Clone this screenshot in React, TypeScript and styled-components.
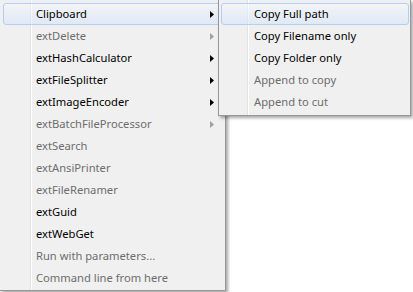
import React from 'react';
import styled, { createGlobalStyle } from 'styled-components';

const GlobalStyle = createGlobalStyle`
  html, body {
    margin: 0;
    padding: 0;
    background: #ffffff;
  }
  body {
    font-family: "Segoe UI", "Noto Sans", "Liberation Sans", sans-serif;
    font-size: 11.2px;
  }
`;

interface MenuEntry {
  label: string;
  disabled?: boolean;
  submenu?: boolean;
  active?: boolean;
}

const mainItems: MenuEntry[] = [
  { label: 'Clipboard', submenu: true, active: true },
  { label: 'extDelete', submenu: true, disabled: true },
  { label: 'extHashCalculator', submenu: true },
  { label: 'extFileSplitter', submenu: true },
  { label: 'extImageEncoder', submenu: true },
  { label: 'extBatchFileProcessor', submenu: true, disabled: true },
  { label: 'extSearch', disabled: true },
  { label: 'extAnsiPrinter', disabled: true },
  { label: 'extFileRenamer', disabled: true },
  { label: 'extGuid' },
  { label: 'extWebGet' },
  { label: 'Run with parameters...', disabled: true },
  { label: 'Command line from here', disabled: true },
];

const clipboardItems: MenuEntry[] = [
  { label: 'Copy Full path', active: true },
  { label: 'Copy Filename only' },
  { label: 'Copy Folder only' },
  { label: 'Append to copy', disabled: true },
  { label: 'Append to cut', disabled: true },
];

const Screen = styled.div`
  position: relative;
  width: 413px;
  height: 292px;
  overflow: hidden;
  background: #ffffff;
`;

// gutter: grey line + white line at the given offset
const gutter = (x: number) => `linear-gradient(to right,
    transparent ${x}px, #e2e3e3 ${x}px, #e2e3e3 ${x + 1}px,
    #ffffff ${x + 1}px, #ffffff ${x + 2}px, transparent ${x + 2}px)`;

const MainMenu = styled.div`
  width: 219px;
  padding: 3px 3px 1px 3px;
  background: ${gutter(30)}, #f0f0f0;
  border-right: 1px solid #979797;
  border-bottom: 1px solid #979797;
  box-shadow: 2px 2px 3px rgba(0, 0, 0, 0.35);
`;

const SubMenu = styled.div`
  position: absolute;
  left: 218px;
  top: 0;
  width: 188px;
  padding: 3px 1px 2px 2px;
  background: ${gutter(28)}, #f0f0f0;
  border: 1px solid #979797;
  border-top: none;
  box-shadow: 2px 2px 3px rgba(0, 0, 0, 0.35);
`;

const Item = styled.div<{ $active?: boolean; $disabled?: boolean }>`
  display: flex;
  align-items: center;
  height: 22px;
  box-sizing: border-box;
  padding: 0 7px 0 32px;
  border: 1px solid ${(p) => (p.$active ? '#aecff7' : 'transparent')};
  border-radius: 3px;
  background: ${(p) =>
    p.$active
      ? 'linear-gradient(to bottom, rgba(246, 250, 255, 0.45), rgba(205, 224, 252, 0.45))'
      : 'transparent'};
  color: ${(p) => (p.$disabled ? '#6d6d6d' : '#000000')};
  white-space: nowrap;
`;

const Label = styled.span`
  flex: 1;
  line-height: 20px;
`;

const Arrow = styled.svg<{ $disabled?: boolean }>`
  width: 4px;
  height: 7px;
  fill: ${(p) => (p.$disabled ? '#a0a0a0' : '#000000')};
`;

const MenuRow: React.FC<{ entry: MenuEntry }> = ({ entry }) => (
  <Item $active={entry.active} $disabled={entry.disabled}>
    <Label>{entry.label}</Label>
    {entry.submenu && (
      <Arrow $disabled={entry.disabled} viewBox="0 0 4 7">
        <polygon points="0,0 4,3.5 0,7" />
      </Arrow>
    )}
  </Item>
);

export default function App() {
  return (
    <Screen>
      <GlobalStyle />
      <MainMenu>
        {mainItems.map((it) => (
          <MenuRow key={it.label} entry={it} />
        ))}
      </MainMenu>
      <SubMenu>
        {clipboardItems.map((it) => (
          <MenuRow key={it.label} entry={it} />
        ))}
      </SubMenu>
    </Screen>
  );
}
